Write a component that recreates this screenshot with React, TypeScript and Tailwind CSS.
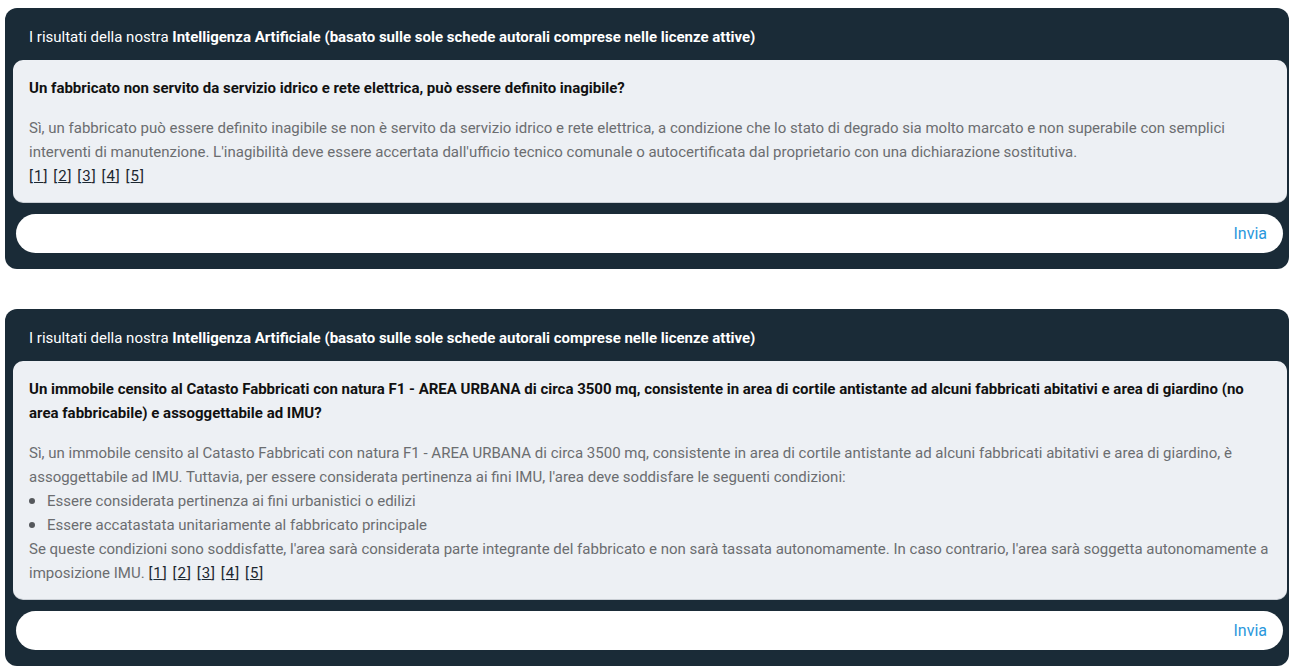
import { Fragment } from "react"

type Risposta = {
  domanda: string
  testo: string
  elenco?: string[]
  coda?: string
  fonti: number[]
}

const risposte: Risposta[] = [
  {
    domanda: "Un fabbricato non servito da servizio idrico e rete elettrica, può essere definito inagibile?",
    testo:
      "Sì, un fabbricato può essere definito inagibile se non è servito da servizio idrico e rete elettrica, a condizione che lo stato di degrado sia molto marcato e non superabile con semplici interventi di manutenzione. L'inagibilità deve essere accertata dall'ufficio tecnico comunale o autocertificata dal proprietario con una dichiarazione sostitutiva.",
    fonti: [1, 2, 3, 4, 5],
  },
  {
    domanda:
      "Un immobile censito al Catasto Fabbricati con natura F1 - AREA URBANA di circa 3500 mq, consistente in area di cortile antistante ad alcuni fabbricati abitativi e area di giardino (no area fabbricabile) e assoggettabile ad IMU?",
    testo:
      "Sì, un immobile censito al Catasto Fabbricati con natura F1 - AREA URBANA di circa 3500 mq, consistente in area di cortile antistante ad alcuni fabbricati abitativi e area di giardino, è assoggettabile ad IMU. Tuttavia, per essere considerata pertinenza ai fini IMU, l'area deve soddisfare le seguenti condizioni:",
    elenco: [
      "Essere considerata pertinenza ai fini urbanistici o edilizi",
      "Essere accatastata unitariamente al fabbricato principale",
    ],
    coda:
      "Se queste condizioni sono soddisfatte, l'area sarà considerata parte integrante del fabbricato e non sarà tassata autonomamente. In caso contrario, l'area sarà soggetta autonomamente a imposizione IMU.",
    fonti: [1, 2, 3, 4, 5],
  },
]

function Fonti({ fonti }: { fonti: number[] }) {
  return (
    <span className="tracking-[1px] text-[#1c2730]">
      {fonti.map((n, i) => (
        <Fragment key={n}>
          {i > 0 && " "}
          [<a href="#" className="underline underline-offset-1">{n}</a>]
        </Fragment>
      ))}
    </span>
  )
}

function CardAI({ r }: { r: Risposta }) {
  return (
    <section className="rounded-[12px] bg-[#1a2b37] pt-[18px] pb-4 pl-2 pr-[2px]">
      <p className="px-4 text-[15px] leading-[22px] text-white">
        I risultati della nostra{" "}
        <strong className="font-bold">
          Intelligenza Artificiale (basato sulle sole schede autorali comprese nelle licenze attive)
        </strong>
      </p>

      <div className="mt-3 rounded-[10px] bg-[#edf0f4] px-4 pt-4 pb-[14px] shadow-[0_1px_0_#c9ced4]">
        <h3 className="text-[15px] font-bold leading-6 text-[#111]">{r.domanda}</h3>
        <div className="mt-4 text-[15px] leading-6 text-[#6b6d70]">
          <p>
            {r.testo}
            {!r.elenco && (
              <>
                <br />
                <Fonti fonti={r.fonti} />
              </>
            )}
          </p>
          {r.elenco && (
            <ul>
              {r.elenco.map((v) => (
                <li key={v} className="flex items-center gap-3">
                  <span className="h-[6px] w-[6px] rounded-full bg-[#55585c]" />
                  {v}
                </li>
              ))}
            </ul>
          )}
          {r.coda && (
            <p>
              {r.coda} <Fonti fonti={r.fonti} />
            </p>
          )}
        </div>
      </div>

      <form className="mt-3 ml-[3px] mr-[4px] flex h-[39px] items-center rounded-full bg-white pl-5 pr-4">
        <input className="flex-1 bg-transparent text-[15px] outline-none" aria-label="Domanda" />
        <button type="button" className="text-[16px] text-[#2a97dc]">
          Invia
        </button>
      </form>
    </section>
  )
}

export default function App() {
  return (
    <div className="min-h-screen bg-white pt-2 pl-[5px] pr-[6px] font-['Roboto',sans-serif]">
      <div className="flex flex-col gap-10">
        {risposte.map((r, i) => (
          <CardAI key={i} r={r} />
        ))}
      </div>
    </div>
  )
}
